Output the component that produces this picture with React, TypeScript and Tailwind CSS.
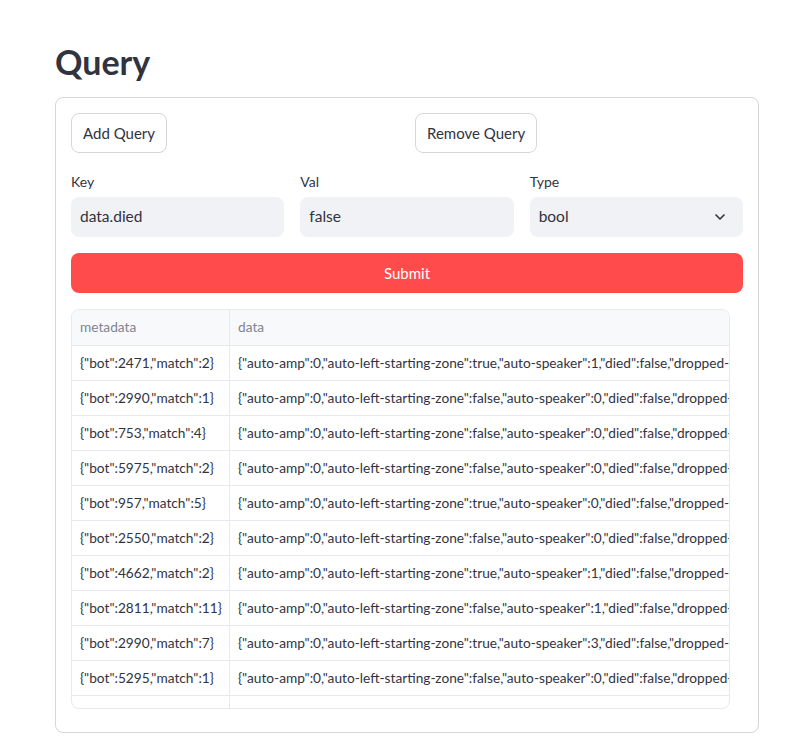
import { ChevronDown } from "lucide-react";

const rows = [
  ['{"bot":2471,"match":2}', "true", "1"],
  ['{"bot":2990,"match":1}', "false", "0"],
  ['{"bot":753,"match":4}', "false", "0"],
  ['{"bot":5975,"match":2}', "false", "0"],
  ['{"bot":957,"match":5}', "true", "0"],
  ['{"bot":2550,"match":2}', "false", "0"],
  ['{"bot":4662,"match":2}', "true", "1"],
  ['{"bot":2811,"match":11}', "false", "1"],
  ['{"bot":2990,"match":7}', "true", "3"],
  ['{"bot":5295,"match":1}', "false", "0"],
];

function Field({ label, value, select }: { label: string; value: string; select?: boolean }) {
  return (
    <div className="flex flex-col">
      <label className="text-sm h-[28px] pt-[3px] text-[#31333f]">{label}</label>
      <div className="h-10 rounded-lg bg-[#f0f2f6] flex items-center justify-between px-[9px] text-[15.5px] text-[#31333f]">
        <span>{value}</span>
        {select && <ChevronDown size={16} strokeWidth={2.5} className="mr-[6px]" />}
      </div>
    </div>
  );
}

export default function App() {
  return (
    <div className="min-h-screen bg-white pt-[40px] px-[55px] text-[#31333f]" style={{ fontFamily: "Lato, 'Noto Sans', sans-serif" }}>
      <div className="w-[704px]">
        <h1 className="text-[34px] font-bold leading-[40px] h-[57px] pt-[2px]">Query</h1>
        <div className="border border-[#d6d6d9] rounded-lg p-[15px] h-[636px]">
          <div className="grid grid-cols-2 gap-4">
            <div>
              <button className="h-10 px-[11px] rounded-lg border border-[#d6d6d9] bg-white text-[15px]">Add Query</button>
            </div>
            <div>
              <button className="h-10 px-[11px] rounded-lg border border-[#d6d6d9] bg-white text-[15px]">Remove Query</button>
            </div>
          </div>
          <div className="grid grid-cols-3 gap-4 mt-[16px]">
            <Field label="Key" value="data.died" />
            <Field label="Val" value="false" />
            <Field label="Type" value="bool" select />
          </div>
          <button className="mt-4 w-full h-10 rounded-lg bg-[#ff4b4b] text-white text-[15px]">Submit</button>
          <div className="mt-4 w-[659px] h-[400px] border border-[#e6e9ef] rounded-lg overflow-hidden text-[13.7px]">
            <div className="flex h-[36px] bg-[#f8f9fb] border-b border-[#e6e9ef] text-[#808495]">
              <div className="w-[158px] shrink-0 border-r border-[#e6e9ef] px-2 flex items-center">metadata</div>
              <div className="flex-1 px-2 flex items-center">data</div>
            </div>
            {[...rows, null].map((r, i) => (
              <div key={i} className="flex h-[35px] border-b border-[#e6e9ef]">
                <div className="w-[158px] shrink-0 border-r border-[#e6e9ef] px-2 flex items-center whitespace-nowrap overflow-hidden">
                  {r ? r[0] : ""}
                </div>
                <div className="flex-1 px-2 flex items-center whitespace-nowrap overflow-hidden">
                  {r
                    ? `{"auto-amp":0,"auto-left-starting-zone":${r[1]},"auto-speaker":${r[2]},"died":false,"dropped-notes":0}`
                    : ""}
                </div>
              </div>
            ))}
          </div>
        </div>
      </div>
    </div>
  );
}
